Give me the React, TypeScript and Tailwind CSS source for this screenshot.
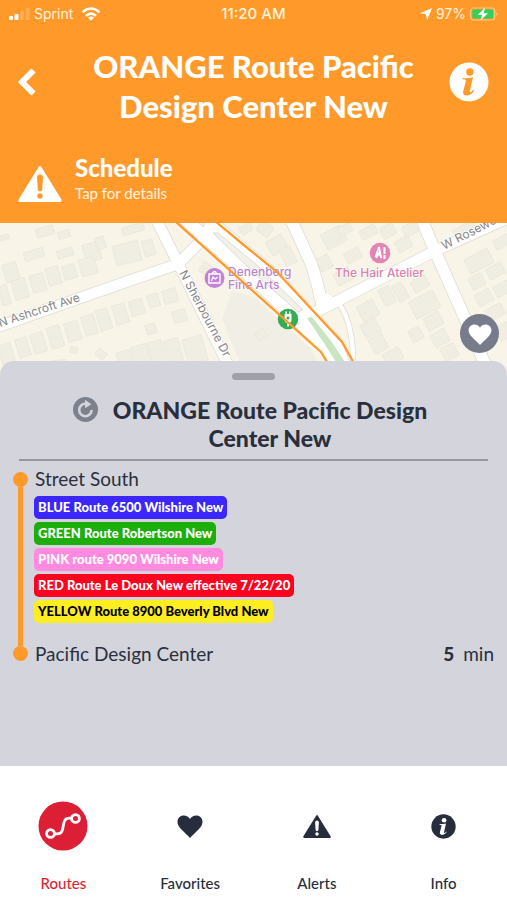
import type { ReactNode } from "react";

const chips = [
  { name: "BLUE Route 6500 Wilshire New", color: "bg-[#3b26fb] text-white" },
  { name: "GREEN Route Robertson New", color: "bg-[#1eae0c] text-white" },
  { name: "PINK route 9090 Wilshire New", color: "bg-[#ff8ae0] text-white" },
  { name: "RED Route Le Doux New effective 7/22/20", color: "bg-[#fc0320] text-white" },
  { name: "YELLOW Route 8900 Beverly Blvd New", color: "bg-[#fcee21] text-black" },
];

// x, y, width, height, rotation
const buildings = [
  [4, 40, 14, 18, -18], [24, 27, 20, 9, -18], [36, 4, 18, 9, -16], [57, 26, 16, 8, -16],
  [58, 8, 12, 7, -16], [84, 20, 16, 18, -16], [96, 14, 9, 12, -16], [114, 20, 26, 20, -14],
  [143, 17, 11, 16, -16], [122, 2, 22, 8, -16], [80, 35, 16, 17, -16], [0, 62, 9, 20, -16],
  [13, 56, 14, 20, -16], [31, 51, 14, 18, -16], [47, 44, 13, 18, -16], [63, 42, 13, 14, -16],
  [0, 12, 9, 5, -16], [0, 121, 13, 20, -17], [17, 115, 12, 19, -17], [32, 110, 13, 20, -17],
  [49, 103, 13, 22, -17], [66, 99, 14, 19, -17], [83, 92, 13, 20, -17], [98, 86, 12, 21, -17],
  [114, 81, 13, 20, -17], [130, 77, 14, 15, -17], [148, 71, 11, 13, -17], [163, 66, 14, 14, -17],
  [173, 87, 13, 12, -17], [146, 101, 10, 10, -17], [96, 127, 10, 8, 40], [70, 124, 7, 6, 10],
  [118, 128, 14, 18, -16], [133, 122, 16, 22, -16], [150, 118, 14, 24, -16], [166, 116, 15, 24, -16],
  [185, 114, 20, 26, -16], [52, 137, 14, 10, -10], [256, 108, 10, 8, -35],
  [200, 42, 16, 11, 35], [240, 2, 12, 8, -30], [258, 0, 14, 12, 35], [268, 14, 18, 16, -30],
  [282, 24, 12, 18, -25], [323, 6, 22, 17, -28], [345, 27, 16, 11, -28], [318, 33, 13, 14, -28],
  [338, 2, 14, 9, -28], [360, 4, 17, 10, -28], [381, 2, 14, 12, -28], [396, 15, 15, 12, -28],
  [403, 1, 14, 11, -28], [335, 47, 17, 13, -28], [359, 79, 18, 17, -28], [362, 98, 17, 15, -28],
  [371, 113, 15, 16, -28], [384, 127, 18, 13, -28], [381, 64, 12, 18, -28], [395, 60, 11, 18, -28],
  [411, 72, 27, 19, -28], [412, 55, 16, 12, -28], [425, 91, 17, 14, -28], [432, 108, 16, 14, -28],
  [410, 105, 12, 13, -28], [442, 122, 15, 14, -28], [453, 2, 22, 8, -28], [466, 30, 26, 16, -28],
  [470, 52, 14, 13, -28], [487, 42, 17, 12, -28], [476, 68, 16, 13, -28], [494, 60, 16, 12, -28],
  [486, 83, 18, 12, -28], [494, 14, 16, 10, -28], [497, 101, 14, 15, -28],
];

function Triangle({ className }: { className: string }) {
  return (
    <svg viewBox="0 0 44 36" className={className} aria-hidden="true">
      <path
        fillRule="evenodd"
        fill="currentColor"
        d="M20.6 1.1Q22-.9 23.4 1.1L43.4 33.5Q44.3 36 41.8 36H2.2Q-.3 36 .6 33.5ZM22 8.6Q18.8 8.6 19 12L19.7 22.5Q19.9 25.4 22 25.4T24.3 22.5L25 12Q25.2 8.6 22 8.6ZM22 27.2A2.7 2.7 0 1 0 22 32.6A2.7 2.7 0 1 0 22 27.2Z"
      />
    </svg>
  );
}

function InfoCircle({ className, mark }: { className: string; mark: string }) {
  return (
    <svg viewBox="0 0 40 40" className={className} aria-hidden="true">
      <circle cx="20" cy="20" r="19.5" fill="currentColor" />
      <g fill={mark}>
        <circle cx="20.9" cy="10" r="3.7" />
        <path d="M13.8 16.1Q18.5 16.4 24 15.3L20.8 29.1Q20.4 30.8 21.6 30.3Q22.8 29.6 24.3 27.8L25.2 28.7Q21.8 33.7 17.6 33.5Q13.2 33.1 14.3 28.9L16.8 19.2Q17.2 17.6 15.9 17.5L13.6 17.3Z" />
      </g>
    </svg>
  );
}

function Heart({ className }: { className: string }) {
  return (
    <svg viewBox="0 0 26 23" className={className} aria-hidden="true">
      <path
        fill="currentColor"
        d="M13 23C11 20.5 7.2 17.4 4.2 14.2C1.6 11.4.5 9.4.5 6.8C.5 3.2 3.2.5 6.8.5C9.4.5 11.8 1.8 13 4C14.2 1.8 16.6.5 19.2.5C22.8.5 25.5 3.2 25.5 6.8C25.5 9.4 24.4 11.4 21.8 14.2C18.8 17.4 15 20.5 13 23Z"
      />
    </svg>
  );
}

function StatusBar() {
  return (
    <div className="grid h-7 grid-cols-3 items-center px-2 font-[Inter,sans-serif] text-sm text-[#fff3dc]">
      <div className="flex items-center gap-1">
        <svg viewBox="0 0 22 12" className="h-3 w-[22px]" fill="#fff" aria-hidden="true">
          <rect x="1" y="8" width="4" height="4" rx="1" />
          <rect x="6.5" y="6" width="4" height="6" rx="1" />
          <rect x="12" y="3" width="4" height="9" rx="1" opacity=".2" />
          <rect x="17.5" y="0" width="4" height="12" rx="1" opacity=".2" />
        </svg>
        <span>Sprint</span>
        <svg viewBox="0 0 20 14" className="ml-1 h-[14px] w-5" fill="none" stroke="#fff" strokeWidth="2.6" aria-hidden="true">
          <path d="M1.6 5.2Q10-2.2 18.4 5.2M5 8.8Q10 4.4 15 8.8" />
          <path d="M7 10.6Q10 8.4 13 10.6L10 13.8Z" fill="#fff" stroke="none" />
        </svg>
      </div>
      <div className="text-center text-[15px] font-medium">11:20 AM</div>
      <div className="flex items-center justify-end gap-1">
        <svg viewBox="0 0 12 12" className="h-3 w-3" fill="#fff" aria-hidden="true">
          <path d="M12 0L7.2 12L5.8 6.3L0 5.2Z" />
        </svg>
        <span>97%</span>
        <svg viewBox="0 0 29 14" className="h-[14px] w-[29px]" aria-hidden="true">
          <rect x=".7" y="1" width="24" height="12" rx="3" fill="none" stroke="#ffc98a" strokeWidth="1.2" />
          <rect x="2.4" y="2.6" width="20.6" height="8.8" rx="1.5" fill="#32d158" />
          <path d="M26.4 5Q28.6 7 26.4 9Z" fill="#ffc98a" />
          <path d="M15 .8L7.6 8H12L10.4 13.4L18 6.2H13.6Z" fill="#fff" />
        </svg>
      </div>
    </div>
  );
}

function RouteMap() {
  return (
    <svg
      viewBox="0 0 507 152"
      preserveAspectRatio="xMidYMid slice"
      className="block h-[152px] w-full bg-[#f8f4e8]"
      role="img"
      aria-label="Route map"
    >
      <path d="M232 68L254 74L312 127L322 152H245L222 96Z" fill="#f1eee5" />
      <g fill="#f0ede3" stroke="#e9e5da" strokeWidth=".7">
        {buildings.map(([x, y, w, h, r], i) => (
          <rect key={i} x={x} y={y} width={w} height={h} transform={`rotate(${r} ${x + w / 2} ${y + h / 2})`} />
        ))}
      </g>
      {["#dedbd2", "#ffffff"].map((color, i) => (
        <g key={color} fill="none" stroke={color} strokeLinejoin="round">
          <path d="M-5 105L40 89L120 61L178 41L205 14" strokeWidth={12 - i * 1.5} />
          <path d="M153-10L178 40L232 150" strokeWidth={12 - i * 1.5} />
          <path d="M310 92L435 28L515-8" strokeWidth={12 - i * 1.5} />
          <path d="M419-10L435 28L490 152" strokeWidth={13 - i * 1.5} />
          <path d="M288-10L311 40Q318 60 323 88" strokeWidth={13 - i * 1.5} />
          <path d="M340 82Q355 104 353 152" strokeWidth={6 - i * 1.5} />
          <path
            d="M178-3L217-3L277 48L341 117L353 152L334 152L322 129L290 97L254 64Z"
            fill={color}
            strokeWidth={3 - i * 1.5}
          />
        </g>
      ))}
      <path d="M316 52L318 80L340 78L325 70Z" fill="#fff" />
      <g fill="#f2f0e9" stroke="#d8d5cc" strokeWidth=".8">
        <path d="M213 10L218 10L258 43L303 87L298 89L256 52Z" />
        <path d="M197-2L203 4L206-2Z" />
      </g>
      <path d="M307 95L312 94L331 118L347 142L338 142L324 120Z" fill="#c9e4c1" />

      <g className="font-[Inter,sans-serif] text-[12px]" fill="#858585" stroke="#fff" strokeWidth="2" paintOrder="stroke">
        <text transform="translate(0 104) rotate(-18)">N Ashcroft Ave</text>
        <text transform="translate(179 50) rotate(62)">N Sherbourne Dr</text>
        <text transform="translate(444 27) rotate(-27)">W Rosewo</text>
      </g>
      <g className="font-[Inter,sans-serif] text-[12px] font-medium" stroke="#fff" strokeWidth="1" paintOrder="stroke">
        <text x="228" y="53" fill="#bb86cf">Denenberg</text>
        <text x="228" y="66" fill="#bb86cf">Fine Arts</text>
        <text x="335" y="54" fill="#d982b0">The Hair Atelier</text>
      </g>

      <circle cx="214.500" cy="55" r="10" fill="#c282d6" />
      <g fill="none" stroke="#fff" strokeWidth="1.400">
        <path d="M209 51H220V60H209ZM212 51Q214.500 46 217 51" />
        <path d="M211.500 58L213 54L215.500 56L217.500 54" strokeWidth="1.200" />
      </g>
      <circle cx="380" cy="30" r="10.300" fill="#e384b5" />
      <g fill="none" stroke="#fff" strokeWidth="1.800">
        <path d="M379 24L375.500 34M379 24L381 34M376 35L379 30L381.500 35" />
        <path d="M384.500 24V31M384.500 32V36" strokeWidth="2" />
      </g>
      <circle cx="288" cy="96" r="10.300" fill="#36ad55" />
      <g fill="#fff">
        <path d="M284.500 91H291.500V97Q291.500 100 288 100T284.500 97ZM285.500 88.500H287V91H285.500ZM289 88.500H290.500V91H289ZM287 100H289V103.500H287Z" />
        <circle cx="288" cy="95" r="1.500" fill="#36ad55" />
      </g>

      <g fill="none" stroke="#ff9a2a" strokeWidth="2.300">
        <path d="M175-2L254 69L321 129L329 142" />
        <path d="M215-2L245 23L277 49L342 119L355 142" />
      </g>
    </svg>
  );
}

function Tab({ label, active, children }: { label: string; active?: boolean; children: ReactNode }) {
  return (
    <button className={`flex flex-col items-center ${active ? "text-[#dc1f35]" : "text-[#272d3c]"}`}>
      <span className="flex h-12 items-center">{children}</span>
      <span className="mt-[23px] text-[15px] leading-5 font-medium">{label}</span>
    </button>
  );
}

export default function App() {
  return (
    <div className="flex min-h-screen flex-col bg-white font-[Lato,sans-serif] text-[#2a2f3d]">
      <header className="bg-[#ff9a2a] pb-[18px] text-white">
        <StatusBar />
        <div className="flex items-start justify-between px-[18px] pt-[18px]">
          <button aria-label="Back" className="mt-4 flex h-10 w-10 items-center">
            <svg viewBox="0 0 18 28" className="h-7 w-[18px]" aria-hidden="true">
              <path d="M15.500 2.500L4 14L15.500 25.500" fill="none" stroke="#fff" strokeWidth="6" />
            </svg>
          </button>
          <h1 className="max-w-[350px] text-center text-[31px] leading-10 font-black">
            ORANGE Route Pacific Design Center New
          </h1>
          <button aria-label="Information" className="mt-4 text-white">
            <InfoCircle className="h-10 w-10" mark="#ff9a2a" />
          </button>
        </div>
        <button className="mt-7 flex w-full items-center px-[18px] text-left">
          <Triangle className="mt-2 h-9 w-11" />
          <span className="ml-[13px] flex flex-col">
            <span className="text-2xl leading-7 font-black">Schedule</span>
            <span className="text-[15px] leading-[23px] text-[#fff3e2]">Tap for details</span>
          </span>
        </button>
      </header>

      <div className="relative">
        <RouteMap />
        <button
          aria-label="Add to favorites"
          className="absolute right-2 bottom-[22px] flex h-[39px] w-[39px] items-center justify-center rounded-full bg-[#787b8b] pt-px text-white"
        >
          <Heart className="h-[21px] w-6" />
        </button>
      </div>

      <main className="relative -mt-[14px] flex-1 rounded-t-[14px] bg-[#d4d5dc] pt-3">
        <div className="mx-auto h-[7px] w-[43px] rounded-full bg-[#a0a1a7]" />
        <div className="mx-[19px] mt-4 flex justify-center gap-3 border-b-2 border-[#9597a0] pr-1 pb-[7px]">
          <button aria-label="Refresh" className="mt-[1px] h-[25px] w-[25px] shrink-0">
            <svg viewBox="0 0 25 25" className="h-[25px] w-[25px]" aria-hidden="true">
              <circle cx="12.500" cy="12.500" r="12.500" fill="#7d818c" />
              <path d="M12.500 6.800A6.200 6.200 0 1 0 18.600 13" fill="none" stroke="#d4d5dc" strokeWidth="2.600" />
              <path d="M12 2.800L18.300 7.200L12 11.200Z" fill="#d4d5dc" />
            </svg>
          </button>
          <h2 className="max-w-80 text-center text-[23px] leading-7 font-black">
            ORANGE Route Pacific Design Center New
          </h2>
        </div>

        <div className="mt-[3px] flex px-[13px]">
          <div className="flex flex-col items-center py-2">
            <span className="h-[15px] w-[15px] rounded-full bg-[#ff9a2a]" />
            <span className="w-[5px] flex-1 bg-[#ff9a2a]" />
            <span className="h-[15px] w-[15px] rounded-full bg-[#ff9a2a]" />
          </div>
          <div className="flex-1 text-[19px] leading-[30px]">
            <p className="pl-[7px]">Street South</p>
            <ul className="mt-[2px] mb-4 ml-[6px] flex flex-col items-start gap-[3px]">
              {chips.map((chip) => (
                <li key={chip.name} className={`rounded-[5px] px-1 text-[13px] leading-[23px] font-black ${chip.color}`}>
                  {chip.name}
                </li>
              ))}
            </ul>
            <div className="flex justify-between pl-[7px]">
              <p>Pacific Design Center</p>
              <p>
                <strong className="mr-1 font-black">5</strong> min
              </p>
            </div>
          </div>
        </div>
      </main>

      <nav className="grid grid-cols-4 bg-white pt-9 pb-[7px]">
        <Tab label="Routes" active>
          <svg viewBox="0 0 50 50" className="h-[50px] w-[50px]" aria-hidden="true">
            <circle cx="25" cy="25" r="24.500" fill="#dc1f35" />
            <g fill="none" stroke="#fff" strokeWidth="2.800">
              <circle cx="12.500" cy="32.500" r="3.900" />
              <circle cx="37.500" cy="17.500" r="3.900" />
              <path d="M16.500 32.800H19.500C28.500 32.800 22 17.200 31 17.200H33.500" />
            </g>
          </svg>
        </Tab>
        <Tab label="Favorites">
          <Heart className="h-[23px] w-[26px]" />
        </Tab>
        <Tab label="Alerts">
          <Triangle className="h-[23px] w-7" />
        </Tab>
        <Tab label="Info">
          <InfoCircle className="h-[25px] w-[25px]" mark="#ffffff" />
        </Tab>
      </nav>
    </div>
  );
}
